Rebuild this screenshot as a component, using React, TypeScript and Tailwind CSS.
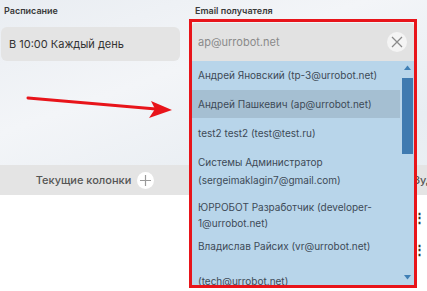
import React from "react";

const items: { lines: string[]; cls: string; active?: boolean }[] = [
  { lines: ["Андрей Яновский (tp-3@urrobot.net)"], cls: "h-[29px] justify-center" },
  { lines: ["Андрей Пашкевич (ap@urrobot.net)"], cls: "h-[28px] justify-center", active: true },
  { lines: ["test2 test2 (test@test.ru)"], cls: "h-[30px] justify-center" },
  { lines: ["Системы Администратор", "(sergeimaklagin7@gmail.com)"], cls: "py-[5px] leading-[18px]" },
  { lines: ["ЮРРОБОТ Разработчик (developer-", "1@urrobot.net)"], cls: "pt-[5px] pb-[5px] leading-[16px]" },
  { lines: ["Владислав Райсих (vr@urrobot.net)"], cls: "h-[20px] justify-center" },
  { lines: ["(tech@urrobot.net)"], cls: "pt-[17px] leading-[16px]" },
];

export default function App() {
  return (
    <div
      className="relative w-[427px] h-[291px] overflow-hidden bg-[linear-gradient(160deg,#e9edf2_0%,#f3f5f8_30%,#e8edf2_60%,#eef2f6_100%)] text-[#333]"
      style={{ fontFamily: "Inter, 'Noto Sans', sans-serif" }}
    >
      {/* top form row */}
      <div className="flex pt-[4px] h-[165px]">
        <div className="w-[180px] pl-[1px] flex flex-col">
          <div className="pl-[3px] h-[14px] text-[9px] font-semibold text-[#3a3a3a] leading-[14px]">Расписание</div>
          <div className="mt-[9px] h-[34px] rounded-[6px] bg-[#e4e4e4] flex items-center pl-[8px] text-[11px] text-[#333]">
            В 10:00 Каждый день
          </div>
        </div>
        <div className="ml-[12px] flex-1 flex flex-col">
          <div className="pl-[3px] h-[14px] text-[9px] font-semibold text-[#3a3a3a] leading-[14px]">Email получателя</div>
        </div>
      </div>

      {/* current columns bar */}
      <div className="h-[30px] bg-[#e4e4e4] flex items-center">
        <div className="w-[190px] flex items-center justify-center gap-[6px]">
          <span className="text-[11px] font-medium text-[#555]">Текущие колонки</span>
          <span className="w-[17px] h-[17px] rounded-full bg-white flex items-center justify-center">
            <svg width="13" height="13" viewBox="0 0 13 13">
              <path d="M6.5 1v11M1 6.5h11" stroke="#9a9a9a" strokeWidth="1.2" />
            </svg>
          </span>
        </div>
        <div className="ml-auto text-[11px] text-[#555] font-medium translate-x-[6px]">Зуд</div>
      </div>

      {/* white area */}
      <div className="bg-white h-[96px] flex flex-col items-end pr-[1px] pt-[17px] gap-[22px]">
        <span className="text-[13px] font-bold text-[#333] leading-[10px]">⋮</span>
        <span className="text-[13px] font-bold text-[#333] leading-[10px]">⋮</span>
      </div>

      {/* email input (overlay area) */}
      <div className="absolute left-[192px] top-[23px] w-[222px] h-[38px] bg-[#e2e2e2] rounded-t-[4px] flex items-center pl-[6px]">
        <span className="text-[11px] text-[#8a8a8a]">ap@urrobot.net</span>
        <span className="absolute right-[7px] top-[9px] w-[20px] h-[20px] rounded-full bg-[#f4f4f4] flex items-center justify-center">
          <svg width="12" height="12" viewBox="0 0 12 12">
            <path d="M1 1l10 10M11 1L1 11" stroke="#8a8a8a" strokeWidth="1.3" />
          </svg>
        </span>
      </div>

      {/* dropdown list */}
      <div className="absolute left-[192px] top-[61px] w-[222px] h-[225px] bg-[#b8d5ea] overflow-hidden flex">
        <div className="flex-1 flex flex-col">
          {items.map((it, i) => (
            <div
              key={i}
              className={
                "shrink-0 px-[6px] flex flex-col text-[10px] text-[#3d4a57] " +
                it.cls +
                (it.active ? " bg-[#a5bfd2]" : "")
              }
            >
              {it.lines.map((l, j) => (
                <div key={j}>{l}</div>
              ))}
            </div>
          ))}
        </div>
        <div className="w-[14px] flex flex-col items-center pt-[4px] pb-[6px]">
          <svg width="7" height="5" viewBox="0 0 7 5">
            <path d="M0 5L3.5 0.5 7 5z" fill="#3f7fb5" />
          </svg>
          <div className="mt-[8px] w-[11px] h-[76px] bg-[#3f7ab0]" />
          <div className="flex-1" />
          <svg width="7" height="5" viewBox="0 0 7 5">
            <path d="M0 0L3.5 4.5 7 0z" fill="#3f7fb5" />
          </svg>
        </div>
      </div>

      {/* red annotation box */}
      <div className="absolute left-[189px] top-[19px] w-[228px] h-[269px] border-[3px] border-[#e8141a] pointer-events-none" />

      {/* red arrow */}
      <svg className="absolute left-0 top-0 pointer-events-none" width="200" height="140" viewBox="0 0 200 140">
        <path d="M28 98 L156 109" stroke="#e8141a" strokeWidth="3" strokeLinecap="round" />
        <path d="M172 110 L151 101 L155 109 L149 118 Z" fill="#e8141a" />
      </svg>
    </div>
  );
}
